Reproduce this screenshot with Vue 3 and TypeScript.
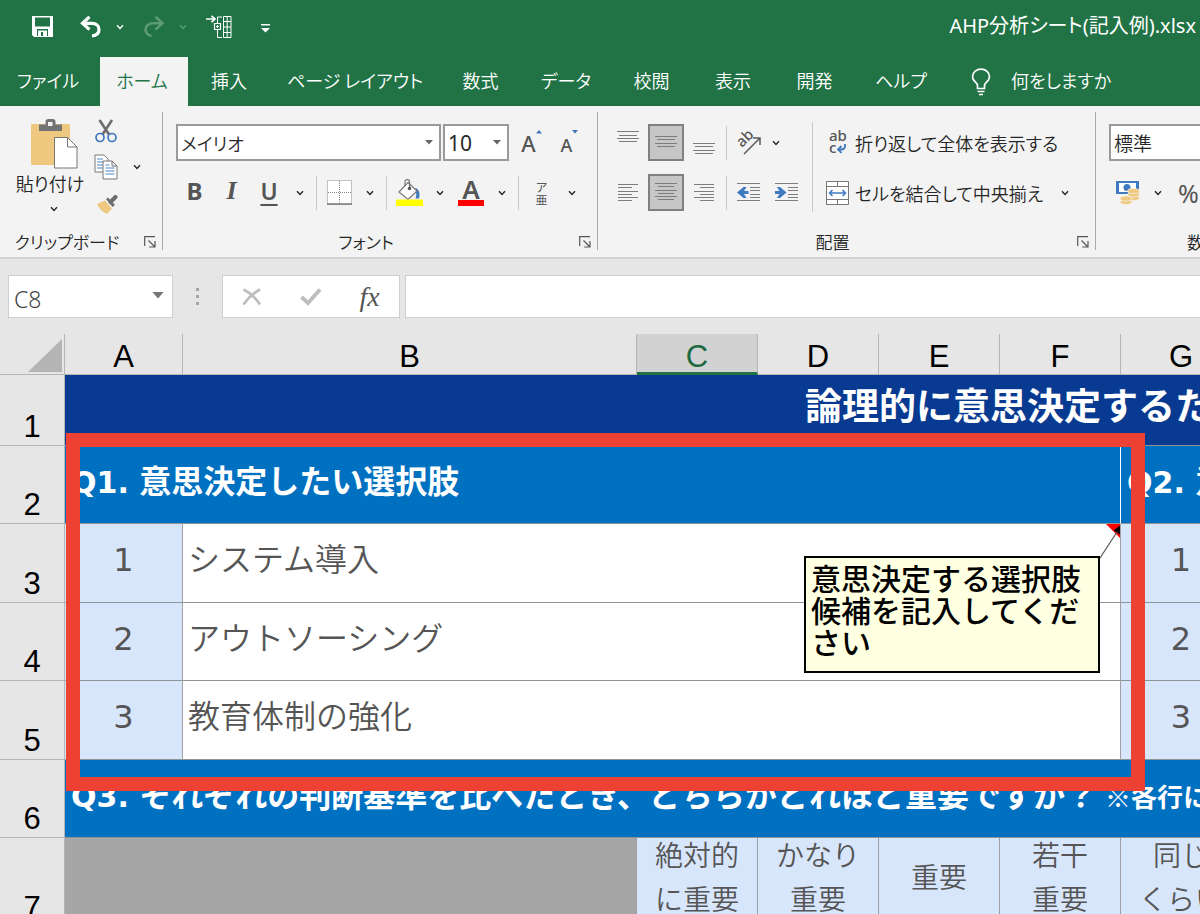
<script setup lang="ts">
interface Tab { label: string; active?: boolean }
interface Choice { no: number; text: string }

const tabs: Tab[] = [
  { label: 'ファイル' },
  { label: 'ホーム', active: true },
  { label: '挿入' },
  { label: 'ページ レイアウト' },
  { label: '数式' },
  { label: 'データ' },
  { label: '校閲' },
  { label: '表示' },
  { label: '開発' },
  { label: 'ヘルプ' },
]
const columns: string[] = ['A', 'B', 'C', 'D', 'E', 'F', 'G']
const selectedColumn = 'C'
const choices: Choice[] = [
  { no: 1, text: 'システム導入' },
  { no: 2, text: 'アウトソーシング' },
  { no: 3, text: '教育体制の強化' },
]
const scale: string[][] = [
  ['絶対的', 'に重要'],
  ['かなり', '重要'],
  ['重要'],
  ['若干', '重要'],
  ['同じ', 'くらい'],
]
</script>

<template>
  <div class="app">
    <svg class="sprite" aria-hidden="true">
      <symbol id="chev" viewBox="0 0 8 6"><path d="M1 1.2 4 4.4 7 1.2" fill="none" stroke="currentColor" stroke-width="1.4" /></symbol>
      <symbol id="tri" viewBox="0 0 8 5"><path d="M0 0H8L4 4.6Z" fill="currentColor" /></symbol>
      <symbol id="launch" viewBox="0 0 12 12">
        <path d="M.7 10V.7H11M4.5 4.5l6 6M11 5v6H5.2" fill="none" stroke="currentColor" stroke-width="1.2" />
      </symbol>
    </svg>

    <header class="titlebar">
      <div class="quick">
        <button aria-label="上書き保存">
          <svg width="22" height="22" viewBox="0 0 22 22"><path fill="#fff" fill-rule="evenodd" d="M0 0H21V21H2L0 19ZM3 1.5V10.5H18V1.5ZM5 13V20H6V14.5H15V20H16V13ZM9 16V20H11V16Z" /></svg>
        </button>
        <button class="undo" aria-label="元に戻す">
          <svg width="22" height="22" viewBox="0 0 22 22" fill="none" stroke="#fff" stroke-width="3.2"><path d="M9.5.8 2.5 7.3l7 6.3M3 7.3h9c4 0 7 2.6 7 6.2 0 3.8-2.6 6-7 6.500" /></svg>
        </button>
        <button aria-label="元に戻す履歴"><svg width="8" height="6"><use href="#chev" /></svg></button>
        <button class="dim" aria-label="やり直し">
          <svg width="22" height="22" viewBox="0 0 22 22" fill="none" stroke="currentColor" stroke-width="2.6"><path d="M12.5.8 19.5 7.3l-7 6.3M19 7.3h-9c-4 0-7.500 2.600-7.500 6.200 0 3.300 2.500 5.500 6 6.500" /></svg>
        </button>
        <button class="dim" aria-label="やり直し履歴"><svg width="8" height="6"><use href="#chev" /></svg></button>
        <button aria-label="セルの挿入">
          <svg width="26" height="24" viewBox="0 0 26 24" fill="none" stroke="#fff">
            <path d="M0 4h9M5.500.8 9 4 5.500 7.200" stroke-width="1.700" />
            <path d="M11.500 8V2H16M11.500 15v7.500H16M17.500 1.500h7.500v21h-7.500zM17.500 6.500h7.500M17.500 12h7.500M17.500 17.500h7.500M21.200 1.500v21" stroke-width="1" />
            <path d="M8.500 8.500h6v6h-6zM11.500 10v3M10 11.500h3" stroke-width="1.200" />
          </svg>
        </button>
        <button class="more" aria-label="クイック アクセス ツール バーのカスタマイズ">
          <svg width="9" height="9" viewBox="0 0 9 9" fill="#fff"><path d="M0 0h9v1.500H0zM0 4h9L4.500 8.500z" /></svg>
        </button>
      </div>
      <div class="filename">AHP分析シート(記入例).xlsx</div>
    </header>

    <nav class="tabs">
      <button v-for="t in tabs" :key="t.label" class="tab" :class="{ active: t.active }">{{ t.label }}</button>
      <button class="tell">
        <svg width="20" height="28" viewBox="0 0 20 28" fill="none" stroke="#fff" stroke-width="1.700">
          <path d="M6.500 20.500v-3C6.500 14.500 1.500 13.500 1.500 8.700 1.500 4.400 5.200 1.200 10 1.200s8.500 3.200 8.500 7.500c0 4.800-5 5.800-5 8.800v3zM6.500 23.500h7M8 26.500h4" />
        </svg>
        <span>何をしますか</span>
      </button>
    </nav>

    <section class="ribbon">
      <div class="group g-clip">
        <div class="clip-body">
          <button class="paste">
            <svg class="clipboard" width="48" height="50" viewBox="0 0 48 50">
              <rect x="0" y="5" width="39" height="41" rx="1.500" fill="#edc87e" />
              <path d="M8 12V5.500h6.500V3q0-3 3-3h4q3 0 3 3v2.500H31V12z" fill="#737373" /><rect x="17" y="3" width="4.500" height="4" fill="#f3f3f3" />
              <path d="M23.500 18.500h13l9.500 9.500v21H23.500z" fill="#fff" stroke="#777" /><path d="M36.500 18.500V28H46" fill="none" stroke="#777" />
            </svg>
            <span>貼り付け</span>
            <svg class="chev" width="8" height="6"><use href="#chev" /></svg>
          </button>
          <div class="clip-tools">
            <button aria-label="切り取り">
              <svg width="22" height="24" viewBox="0 0 22 24" fill="none">
                <path d="M4.500 1 14 15.500M17 1 7.500 15.500" stroke="#6d6d6d" stroke-width="2.600" />
                <circle cx="5" cy="18.500" r="4" stroke="#3f79c0" stroke-width="1.700" /><circle cx="17" cy="18.500" r="4" stroke="#3f79c0" stroke-width="1.700" />
              </svg>
            </button>
            <button aria-label="コピー">
              <svg width="24" height="26" viewBox="0 0 24 26" stroke="#777" fill="#fff">
                <path d="M1 1h9l4 4v13H1z" /><path d="M3 5h6M3 8h6M3 11h6M3 14h6" stroke="#4b87c8" stroke-width="1.200" />
                <path d="M9 7h9l5 5v13H9zM18 7v5h5" /><path d="M11.500 11h4M11.500 14h9M11.500 17h9M11.500 20h9" stroke="#4b87c8" stroke-width="1.200" />
              </svg>
            </button>
            <button aria-label="コピーのオプション"><svg width="8" height="6"><use href="#chev" /></svg></button>
            <button aria-label="書式のコピー/貼り付け">
              <svg width="22" height="20" viewBox="0 0 22 20">
                <path d="M1 9 9 5.500l7 8L11 19Q4 16 1 9z" fill="#edc87e" /><path d="M10 4l2-1.500 7 7.500-2.500 2z" fill="#6d6d6d" />
                <path d="M14.500 7 19.500 2" stroke="#6d6d6d" stroke-width="4" stroke-linecap="round" />
              </svg>
            </button>
          </div>
        </div>
        <footer><span>クリップボード</span><button aria-label="クリップボードの詳細"><svg width="12" height="12"><use href="#launch" /></svg></button></footer>
      </div>

      <div class="group g-font">
        <div class="body">
          <div class="row">
            <span class="combo c-font"><select aria-label="フォント"><option>メイリオ</option></select><svg width="8" height="5"><use href="#tri" /></svg></span>
            <span class="combo c-size"><select aria-label="フォント サイズ"><option>10</option></select><svg width="8" height="5"><use href="#tri" /></svg></span>
            <button class="w37 grow" aria-label="フォント サイズの拡大"><span class="ga">A</span><svg width="6" height="4" viewBox="0 0 6 4"><path d="M0 3.500 3 0l3 3.500z" fill="#3f73b8" /></svg></button>
            <button class="w37 grow small" aria-label="フォント サイズの縮小"><span class="ga">A</span><svg width="6" height="4" viewBox="0 0 6 4"><path d="M0 0h6L3 3.500z" fill="#3f73b8" /></svg></button>
          </div>
          <div class="row">
            <button class="w37 bold">B</button>
            <button class="w37 ital">I</button>
            <button class="w38 under">U</button>
            <button class="w24" aria-label="下線の種類"><svg width="8" height="6"><use href="#chev" /></svg></button>
            <i class="sep" />
            <button class="w37" aria-label="罫線">
              <svg width="25" height="25" viewBox="0 0 25 25" fill="#fff" stroke="#8a8a8a"><path d="M.5.5h24v24H.5z" stroke-dasharray="1 1" /><path d="M12.500 1v23M1 12.500h23" stroke-dasharray="1 1" /><path d="M0 24h25" stroke="#777" stroke-width="1.500" /></svg>
            </button>
            <button class="w24" aria-label="罫線の種類"><svg width="8" height="6"><use href="#chev" /></svg></button>
            <i class="sep" />
            <button class="w37" aria-label="塗りつぶしの色">
              <svg width="27" height="27" viewBox="0 0 27 27" fill="none">
                <path d="M20 9q5 3 3 10.500h-3.500q2-5-1-9z" fill="#3f79c0" />
                <path d="M12 3.500 21 12l-9 8.500L3 13z" fill="#fff" stroke="#777" stroke-width="1.200" />
                <path d="M9 7V2.500Q9 .7 11.200.7T13.500 2.500V9" stroke="#777" stroke-width="1.200" /><circle cx="13.500" cy="9.500" r="1.800" fill="#555" />
                <path d="M0 20.500h27V27H0z" fill="#ff0" />
              </svg>
            </button>
            <button class="w24" aria-label="塗りつぶしの色の選択"><svg width="8" height="6"><use href="#chev" /></svg></button>
            <button class="w38 fcolor" aria-label="フォントの色"><span>A</span></button>
            <button class="w24" aria-label="フォントの色の選択"><svg width="8" height="6"><use href="#chev" /></svg></button>
            <i class="sep" />
            <button class="w37 ruby" aria-label="ふりがなの表示"><span>ア</span><span>亜</span></button>
            <button class="w24" aria-label="ふりがなの設定"><svg width="8" height="6"><use href="#chev" /></svg></button>
          </div>
        </div>
        <footer><span>フォント</span><button aria-label="フォントの設定"><svg width="12" height="12"><use href="#launch" /></svg></button></footer>
      </div>

      <div class="group g-align">
        <div class="align-body">
          <div class="body">
            <div class="row gap">
              <button class="al" aria-label="上揃え"><svg width="22" height="26" viewBox="0 0 22 26"><path d="M0 1.500h22M2 5.500h18M0 8.500h22M2 11.500h18" /></svg></button>
              <button class="al on" aria-label="上下中央揃え"><svg width="22" height="22" viewBox="0 0 22 22"><path d="M0 4.500h22M2 7.500h18M0 11.500h22M2 14.500h18" /></svg></button>
              <button class="al" aria-label="下揃え"><svg width="22" height="26" viewBox="0 0 22 26"><path d="M0 13.500h22M2 16.500h18M0 20.500h22M2 23.500h18" /></svg></button>
              <i class="sep s5" />
              <button class="w36" aria-label="方向">
                <svg width="26" height="26" viewBox="0 0 26 26" fill="none" stroke="#5a5a5a" stroke-width="1.500"><text x="0" y="0" transform="translate(6 18) rotate(-45)" class="svg-t">ab</text><path d="M8 24 24 8M17 8h7v7" /></svg>
              </button>
              <button class="w14" aria-label="方向の選択"><svg width="8" height="6"><use href="#chev" /></svg></button>
            </div>
            <div class="row gap">
              <button class="al" aria-label="左揃え"><svg width="20" height="20" viewBox="0 0 20 20"><path d="M0 1.500h20M0 4.500h14M0 8.500h20M0 11.500h14M0 14.500h20M0 17.500h14" /></svg></button>
              <button class="al on" aria-label="中央揃え"><svg width="22" height="20" viewBox="0 0 22 20"><path d="M0 .5h22M3 3.500h16M0 7.500h22M3 10.500h16M0 13.500h22M3 16.500h16" /></svg></button>
              <button class="al" aria-label="右揃え"><svg width="20" height="20" viewBox="0 0 20 20"><path d="M0 1.500h20M6 4.500h14M0 8.500h20M6 11.500h14M0 14.500h20M6 17.500h14" /></svg></button>
              <i class="sep s5" />
              <button class="al" aria-label="インデントを減らす"><svg width="24" height="20" viewBox="0 0 24 20"><path d="M0 .5h23M13 4.500h10M13 7.500h10M13 11.500h10M0 17.500h23M13 14.500h10" /><path class="arrow" d="M0 9.500 6.500 4h3L7 8h4.500v3H7l2.500 4h-3z" /></svg></button>
              <button class="al" aria-label="インデントを増やす"><svg width="24" height="20" viewBox="0 0 24 20"><path d="M0 .5h23M13 4.500h10M13 7.500h10M13 11.500h10M0 17.500h23M13 14.500h10" /><path class="arrow" d="M11.500 9.500 5 4H2l2.500 4H0v3h4.500L2 15h3z" /></svg></button>
            </div>
          </div>
          <i class="tall" />
          <div class="body">
            <button class="row wide">
              <svg width="23" height="26" viewBox="0 0 23 26" fill="none"><text x="3" y="11" class="svg-t">ab</text><text x="3" y="23" class="svg-t">c</text><path d="M19 14v2q0 3-3 3.500h-3M15.500 16 12 19.500l3.500 3.300" stroke="#3f79c0" stroke-width="1.800" /></svg>
              <span>折り返して全体を表示する</span>
            </button>
            <div class="row">
              <button class="row wide">
                <svg width="23" height="24" viewBox="0 0 23 24" fill="none" stroke="#777"><path d="M.5.5h22v23H.5zM.5 5.500h22M.5 18.500h22M11.500.5v5M11.500 18.500v5" fill="#fff" /><path d="M4 12h15M6.500 9 3.500 12l3 3M16.500 9l3 3-3 3" stroke="#3f79c0" stroke-width="1.500" /></svg>
                <span>セルを結合して中央揃え</span>
              </button>
              <button class="w24 merge-more" aria-label="結合の種類"><svg width="8" height="6"><use href="#chev" /></svg></button>
            </div>
          </div>
        </div>
        <footer><span>配置</span><button aria-label="配置の設定"><svg width="12" height="12"><use href="#launch" /></svg></button></footer>
      </div>

      <div class="group g-num">
        <div class="body">
          <div class="row"><span class="combo c-num"><select aria-label="表示形式"><option>標準</option></select></span></div>
          <div class="row">
            <button class="w37" aria-label="通貨表示形式">
              <svg width="24" height="24" viewBox="0 0 24 24"><path d="M0 0h23v13H0z" fill="#3f79c0" /><path d="M3 2h17v9H3z" fill="#fff" /><circle cx="11" cy="6.500" r="3.500" fill="#3f79c0" />
                <g fill="#edc87e" stroke="#f7f1e2" stroke-width=".8"><ellipse cx="17.500" cy="17" rx="6" ry="2.500" /><ellipse cx="17.500" cy="13.500" rx="6" ry="2.500" /><ellipse cx="17.500" cy="10" rx="6" ry="2.500" /><ellipse cx="10" cy="21" rx="6" ry="2.500" /><ellipse cx="10" cy="17.500" rx="6" ry="2.500" /></g></svg>
            </button>
            <button class="w24" aria-label="通貨の選択"><svg width="8" height="6"><use href="#chev" /></svg></button>
            <button class="w37 pct">%</button>
          </div>
        </div>
        <footer><span>数値</span></footer>
      </div>
    </section>

    <section class="formula">
      <span class="namebox"><input aria-label="名前ボックス" value="C8"><svg width="12" height="7"><use href="#tri" /></svg></span>
      <svg class="dots" width="3" height="17" viewBox="0 0 3 17" fill="#a6a6a6"><path d="M0 0h3v3H0zM0 7h3v3H0zM0 14h3v3H0z" /></svg>
      <div class="fbtns">
        <button aria-label="キャンセル"><svg width="20" height="18" viewBox="0 0 20 18" fill="none" stroke="#bdbdbd" stroke-width="2.600"><path d="M1.500 1.500Q11 6 18 16.500M18 1.500Q9 6 1.500 16.500" /></svg></button>
        <button aria-label="入力"><svg width="22" height="18" viewBox="0 0 22 18" fill="none" stroke="#bdbdbd" stroke-width="3.800"><path d="M1.500 9 8 15 20 1.500" /></svg></button>
        <button class="fx" aria-label="関数の挿入">fx</button>
      </div>
      <input class="fin" aria-label="数式バー">
    </section>

    <main class="sheet">
      <table>
        <colgroup><col class="ch"><col class="ca"><col class="cb"><col v-for="n in 5" :key="n" class="cc"></colgroup>
        <thead>
          <tr>
            <th class="corner"><svg width="34" height="34" viewBox="0 0 34 34"><path d="M34 0V33H0z" fill="#b4b4b4" /></svg></th>
            <th v-for="c in columns" :key="c" :class="{ sel: c === selectedColumn }">{{ c }}</th>
          </tr>
        </thead>
        <tbody>
          <tr class="r1"><th>1</th><td colspan="7" class="title">論理的に意思決定するた</td></tr>
          <tr class="r78"><th>2</th><td colspan="6" class="question first"><span class="lat">Q1. </span>意思決定したい選択肢</td><td class="question"><span class="lat">Q2. </span>意</td></tr>
          <tr v-for="(c, i) in choices" :key="c.no" :class="i === 1 ? 'r78' : 'r79'">
            <th>{{ c.no + 2 }}</th><td class="no">{{ c.no }}</td><td colspan="5" class="choice">{{ c.text }}</td><td class="no">{{ c.no }}</td>
          </tr>
          <tr class="r78"><th>6</th><td colspan="7" class="question"><span class="lat">Q3. </span>それぞれの判断基準を比べたとき、どちらがどれほど重要ですか？<small>※各行に</small></td></tr>
          <tr class="r7"><th>7</th><td colspan="2" class="grey" /><td v-for="(s, i) in scale" :key="i" class="scale"><div v-for="l in s" :key="l">{{ l }}</div></td></tr>
        </tbody>
      </table>
      <div class="frame" />
      <svg class="pointer" width="24" height="36" viewBox="0 0 24 36"><path d="M8 0h14v14z" fill="red" /><path d="M22 1.500v9L15.500 6.500z" fill="#000" /><path d="M19 8 2 34" stroke="#555" stroke-width="1.200" /></svg>
      <aside class="note">意思決定する選択肢候補を記入してください</aside>
    </main>
  </div>
</template>

<style>
html, body { margin: 0; overflow: hidden; }
</style>

<style scoped>
.app {
  height: 100vh;
  overflow: hidden;
  display: flex;
  flex-direction: column;
  background: #e6e6e6;
  color: #262626;
  font-family: "Noto Sans", "Noto Sans CJK JP", sans-serif;
  font-size: 18px;
}
.app * { box-sizing: border-box; }
.sprite { position: absolute; width: 0; height: 0; }
button { border: 0; padding: 0; margin: 0; background: none; color: inherit; font: inherit; display: flex; align-items: center; justify-content: center; white-space: nowrap; }
svg { display: block; flex: none; }
.titlebar, .tabs, .ribbon { font-family: "Noto Sans CJK JP", sans-serif; font-feature-settings: "palt"; font-weight: 350; }

.titlebar { height: 57px; flex: none; background: #217346; color: #fff; display: flex; justify-content: space-between; align-items: center; padding: 0 4px 4px 24px; }
.quick { display: grid; grid-template-columns: 38px 44px 28px 40px 18px 54px 38px; grid-auto-rows: 36px; }
.undo { padding-left: 14px; }
.more { padding-top: 4px; }
.dim { color: #5c9a78; }
.filename { font-family: "Noto Sans", "Noto Sans CJK JP", sans-serif; font-size: 20px; font-weight: 400; line-height: 28px; padding-bottom: 2px; white-space: nowrap; }

.tabs { height: 49px; flex: none; background: #217346; color: #fff; display: grid; grid-template-columns: 100px 88px 82px 170px 81px 90px 81px 82px 81px 92px auto; justify-content: start; }
.tab { padding: 0 0 4px; }
.tab:first-child { padding-right: 4px; }
.tab.active { background: #f3f3f3; color: #217346; padding-right: 4px; }
.tell { gap: 20px; padding: 0 24px; }
.tell span { padding-bottom: 3px; }

.ribbon { height: 153px; flex: none; display: flex; background: #f3f3f3; border-bottom: 2px solid #d2d2d2; overflow: hidden; }
.group { flex: none; display: flex; flex-direction: column; justify-content: space-between; margin: 6px 0 7px; }
.group:not(.g-num) { border-right: 1px solid #ababab; }
.g-num { width: 216px; }
.g-clip { width: 163px; }
.g-font { width: 435px; }
.g-align { width: 498px; }
footer { flex: none; height: 26px; display: flex; align-items: center; margin-bottom: -5px; font-size: 17px; }
footer span { flex: 1; text-align: center; line-height: 24px; padding-bottom: 1px; }
footer button { width: 28px; padding-left: 4px; color: #555; }
.clip-body { display: flex; padding: 7px 0 0 15px; }
.paste { flex-direction: column; width: 70px; line-height: 28px; justify-content: flex-start; }
.clipboard { margin-left: 9px; }
.paste .chev { margin: 9px 0 0 8px; }
.clip-tools { display: grid; grid-template-columns: 42px 20px; grid-template-rows: 24px 48px 28px; }
.clip-tools button:nth-child(1) { grid-column: 1 / 3; justify-content: start; padding-left: 10px; }
.clip-tools button:nth-child(2) { justify-content: start; padding-left: 9px; }
.clip-tools button:nth-child(4) { justify-content: start; padding-left: 11px; }

.body { display: flex; flex-direction: column; gap: 13px; padding-top: 12px; }
.g-font .body, .g-num .body { padding-left: 13px; }
.row { display: flex; align-items: center; height: 37px; }
.row.gap { gap: 2px; }
.combo { position: relative; display: block; height: 37px; flex: none; }
.combo select { appearance: none; width: 100%; height: 100%; border: 2px solid #9a9a9a; border-radius: 0; background: #fff; color: #262626; font: inherit; font-feature-settings: inherit; padding: 0 3px; margin: 0; }
.combo svg { position: absolute; right: 8px; top: 16px; color: #666; }
.c-font { width: 265px; margin-right: 2px; }
.c-size { width: 66px; margin-right: 1px; }
.c-size select { font-family: "Noto Sans", sans-serif; font-size: 21px; font-weight: 400; }
.c-num { width: 180px; }
.c-num select { font-size: 19px; }
.w38 { width: 38px; height: 37px; color: #555; }
.w37 { width: 37px; height: 37px; color: #555; }
.w36 { width: 36px; height: 37px; }
.w24 { width: 24px; height: 37px; }
.w14 { width: 14px; height: 37px; }
.grow { font-family: "Noto Sans", sans-serif; font-size: 22px; font-weight: 500; padding-left: 6px; }
.grow svg { align-self: flex-start; margin-top: 6px; }
.grow.small { font-size: 18px; padding-left: 8px; }
.small .ga { padding-top: 4px; }
.bold, .ital, .under { font-size: 24px; font-family: "Noto Sans", sans-serif; font-weight: 700; line-height: 28px; padding-bottom: 4px; }
.ital { font-family: "Liberation Serif", serif; font-style: italic; font-size: 26px; }
.under { font-weight: 600; text-decoration: underline; text-decoration-thickness: 2px; text-underline-offset: 4px; font-size: 23px; }
.sep { width: 9px; height: 34px; flex: none; background: linear-gradient(#c9c9c9, #c9c9c9) center / 1px 100% no-repeat; }
.s5 { width: 5px; }
.fcolor span { width: 26px; height: 27px; border-bottom: 6px solid #f00; font-family: "Noto Sans", sans-serif; font-size: 26px; font-weight: 600; line-height: 20px; text-align: center; }
.ruby { flex-direction: column; font-size: 12px; line-height: 13px; font-weight: 400; }
.align-body { display: flex; }
.align-body .body:first-child { padding-left: 12px; width: 212px; }
.al { width: 36px; height: 37px; flex: none; }
.al svg { stroke: #7d7d7d; stroke-width: 1.200; fill: none; }
.al .arrow { fill: #3f79c0; stroke: none; }
.al.on { background: #c6c6c6; border: 2px solid #808080; }
.tall { width: 5px; height: 90px; margin-top: 10px; background: linear-gradient(#c9c9c9, #c9c9c9) center / 1px 100% no-repeat; }
.wide { gap: 6px; padding-left: 11px; justify-content: flex-start; }
.merge-more { margin-left: 10px; }
.svg-t { font-family: "Noto Sans", sans-serif; font-size: 15px; font-weight: 500; fill: #555; stroke: none; }
.pct { font-family: "Noto Sans", sans-serif; font-size: 25px; font-weight: 400; }

.formula { flex: none; height: 75px; display: flex; align-items: flex-start; padding: 16px 0 0 8px; }
.namebox { position: relative; width: 165px; height: 43px; }
.namebox input, .fin { width: 100%; height: 43px; border: 1px solid #cfcfcf; border-radius: 0; background: #fff; margin: 0; font: inherit; outline: 0; }
.namebox input { font-size: 23px; font-weight: 300; padding: 4px 5px 0; color: #444; }
.namebox svg { position: absolute; right: 9px; top: 17px; color: #777; }
.dots { margin: 13px 23px 0; }
.fbtns { width: 178px; height: 43px; flex: none; margin-right: 5px; border: 1px solid #cfcfcf; background: #fff; display: grid; grid-template-columns: repeat(3, 1fr); }
.fx { font-family: "Liberation Serif", serif; font-style: italic; font-size: 28px; color: #555; }
.fin { flex: 1; border-right: 0; }

.sheet { position: relative; flex: 1; min-height: 0; overflow: hidden; }
table { table-layout: fixed; width: 1242px; border-collapse: separate; border-spacing: 0; }
.ch { width: 65px; }
.ca { width: 118px; }
.cb { width: 454px; }
.cc { width: 121px; }
th, td { padding: 0; border-right: 1px solid #a0a0a0; border-bottom: 1px solid #8f9499; white-space: nowrap; overflow: hidden; }
th { background: #e6e6e6; color: #000; font-family: "Liberation Sans", sans-serif; font-weight: 400; font-size: 31px; border-color: #b5b5b5; }
thead th { height: 41px; line-height: 30px; padding-top: 5px; }
thead th.sel { background: #d2d2d2; color: #1e6a41; border-bottom: 3px solid #217346; padding-top: 7px; }
thead th.corner { padding-top: 4px; }
.corner svg { margin-left: 28px; }
tbody th { vertical-align: bottom; line-height: 36px; }
.r1 { height: 71px; }
.r78 { height: 78px; }
.r79 { height: 79px; }
.r7 { height: 89px; }
td { font-family: "Noto Sans CJK JP", sans-serif; font-size: 32px; line-height: 44px; color: #555; }
.title { background: #083a91; color: #fff; font-weight: 700; font-size: 37px; padding: 0 0 12px 740px; }
.question { background: #0070c1; color: #fff; font-weight: 700; padding: 0 0 8px 6px; }
.first { border-right-color: #fff; }
.lat { font-family: "DejaVu Sans", sans-serif; font-size: 30px; white-space: pre; }
small { font-size: 26px; margin-left: 8px; }
.no { background: #d8e6fc; text-align: center; font-family: "DejaVu Sans", sans-serif; padding-bottom: 6px; }
.choice { background: #fff; font-weight: 350; padding: 0 0 12px 5px; }
.grey { background: #a6a6a6; }
.scale { background: #d8e6fc; text-align: center; font-size: 28px; font-weight: 350; line-height: 32px; padding-bottom: 12px; }
.scale div + div { margin-top: 12px; }
.frame { position: absolute; left: 66px; top: 99px; width: 1079px; height: 358px; border: 14px solid #ed4134; }
.pointer { position: absolute; left: 1098px; top: 190px; }
.note { position: absolute; left: 804px; top: 222px; width: 296px; height: 117px; border: 2px solid #000; background: #ffffe1; color: #000; padding: 3px 5px; font-family: "Noto Sans CJK JP", sans-serif; font-weight: 500; font-size: 30px; line-height: 32px; word-break: break-all; }
</style>
